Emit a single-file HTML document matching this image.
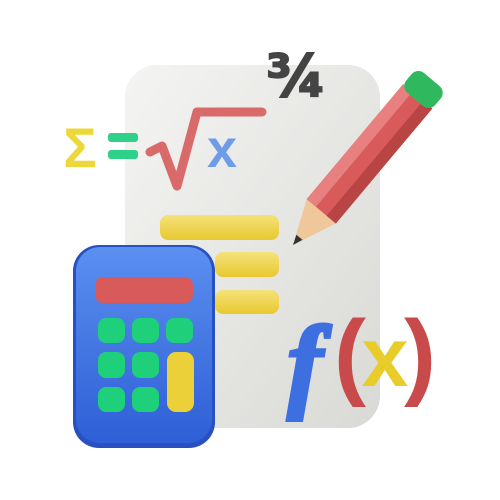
<!DOCTYPE html>
<html><head><meta charset="utf-8"><style>
html,body{margin:0;padding:0;background:#fff;width:500px;height:500px;overflow:hidden}
</style></head><body>
<svg width="500" height="500" viewBox="0 0 500 500" xmlns="http://www.w3.org/2000/svg">
<defs>
<linearGradient id="paper" x1="0" y1="0" x2="1" y2="1">
<stop offset="0" stop-color="#f4f4f2"/><stop offset="1" stop-color="#d9d9d6"/></linearGradient>
<linearGradient id="calc" x1="0" y1="0" x2="0" y2="1">
<stop offset="0" stop-color="#5b8ff0"/><stop offset="1" stop-color="#2f5fd6"/></linearGradient>
<linearGradient id="bar" x1="0" y1="0" x2="0" y2="1">
<stop offset="0" stop-color="#f5e27a"/><stop offset="1" stop-color="#e8c930"/></linearGradient>
</defs>
<rect x="125" y="65" width="255" height="363" rx="32" fill="url(#paper)"/>
<text x="296" y="96" font-family="DejaVu Sans, sans-serif" font-weight="bold" font-size="58" fill="#444" stroke="#444" stroke-width="2" text-anchor="middle">¾</text>
<text x="80" y="167" font-family="Liberation Sans, sans-serif" font-weight="bold" font-size="56" fill="#ecd83a" text-anchor="middle">Σ</text>
<rect x="108" y="133" width="30" height="9" rx="3" fill="#2fd18a"/>
<rect x="108" y="150" width="30" height="9" rx="3" fill="#2fd18a"/>
<path d="M150 152 L162 146 L177 186 L197 112 L262 112" fill="none" stroke="#d96a6a" stroke-width="9" stroke-linejoin="round" stroke-linecap="round"/>
<text x="222" y="167" font-family="Liberation Sans, sans-serif" font-weight="bold" font-size="54" fill="#6f9be8" text-anchor="middle">x</text>
<rect x="160" y="215" width="119" height="25" rx="8" fill="url(#bar)"/>
<rect x="215" y="252" width="64" height="25" rx="8" fill="url(#bar)"/>
<rect x="215" y="290" width="64" height="24" rx="8" fill="url(#bar)"/>
<g transform="translate(293,245) rotate(-50)">
<polygon points="0,0 44,-19 44,19" fill="#f0c79a"/>
<polygon points="0,0 10,-4 10,4" fill="#333"/>
<rect x="44" y="-19" width="150" height="38" fill="#d95a5a"/>
<rect x="44" y="-19" width="150" height="12" fill="#e88080"/>
<rect x="44" y="7" width="150" height="12" fill="#b84444"/>
<rect x="190" y="-19" width="26" height="38" rx="9" fill="#2fb85e"/>
</g>
<rect x="73" y="245" width="142" height="203" rx="26" fill="#2850c0"/>
<rect x="76" y="247" width="136" height="196" rx="24" fill="url(#calc)"/>
<rect x="95" y="277" width="98" height="26" rx="8" fill="#d85a5a"/>
<g fill="#1fd07a">
<rect x="98" y="318" width="27" height="25" rx="8"/><rect x="132" y="318" width="27" height="25" rx="8"/><rect x="166" y="318" width="27" height="25" rx="8"/>
<rect x="98" y="352" width="27" height="26" rx="8"/><rect x="132" y="352" width="27" height="26" rx="8"/>
<rect x="98" y="387" width="27" height="25" rx="8"/><rect x="132" y="387" width="27" height="25" rx="8"/>
</g>
<rect x="167" y="352" width="27" height="60" rx="9" fill="#ecd03a"/>
<text x="305" y="398" font-family="Liberation Serif, serif" font-style="italic" font-weight="bold" font-size="104" fill="#3d6fe0" stroke="#3d6fe0" stroke-width="4" text-anchor="middle">f</text>
<text x="350" y="387" font-family="Liberation Sans, sans-serif" font-weight="bold" font-size="96" fill="#c94a4a" text-anchor="middle">(</text>
<text x="385" y="386" font-family="Liberation Sans, sans-serif" font-weight="bold" font-size="84" fill="#e8cc2a" text-anchor="middle">x</text>
<text x="420" y="387" font-family="Liberation Sans, sans-serif" font-weight="bold" font-size="96" fill="#c94a4a" text-anchor="middle">)</text>
</svg>
</body></html>
